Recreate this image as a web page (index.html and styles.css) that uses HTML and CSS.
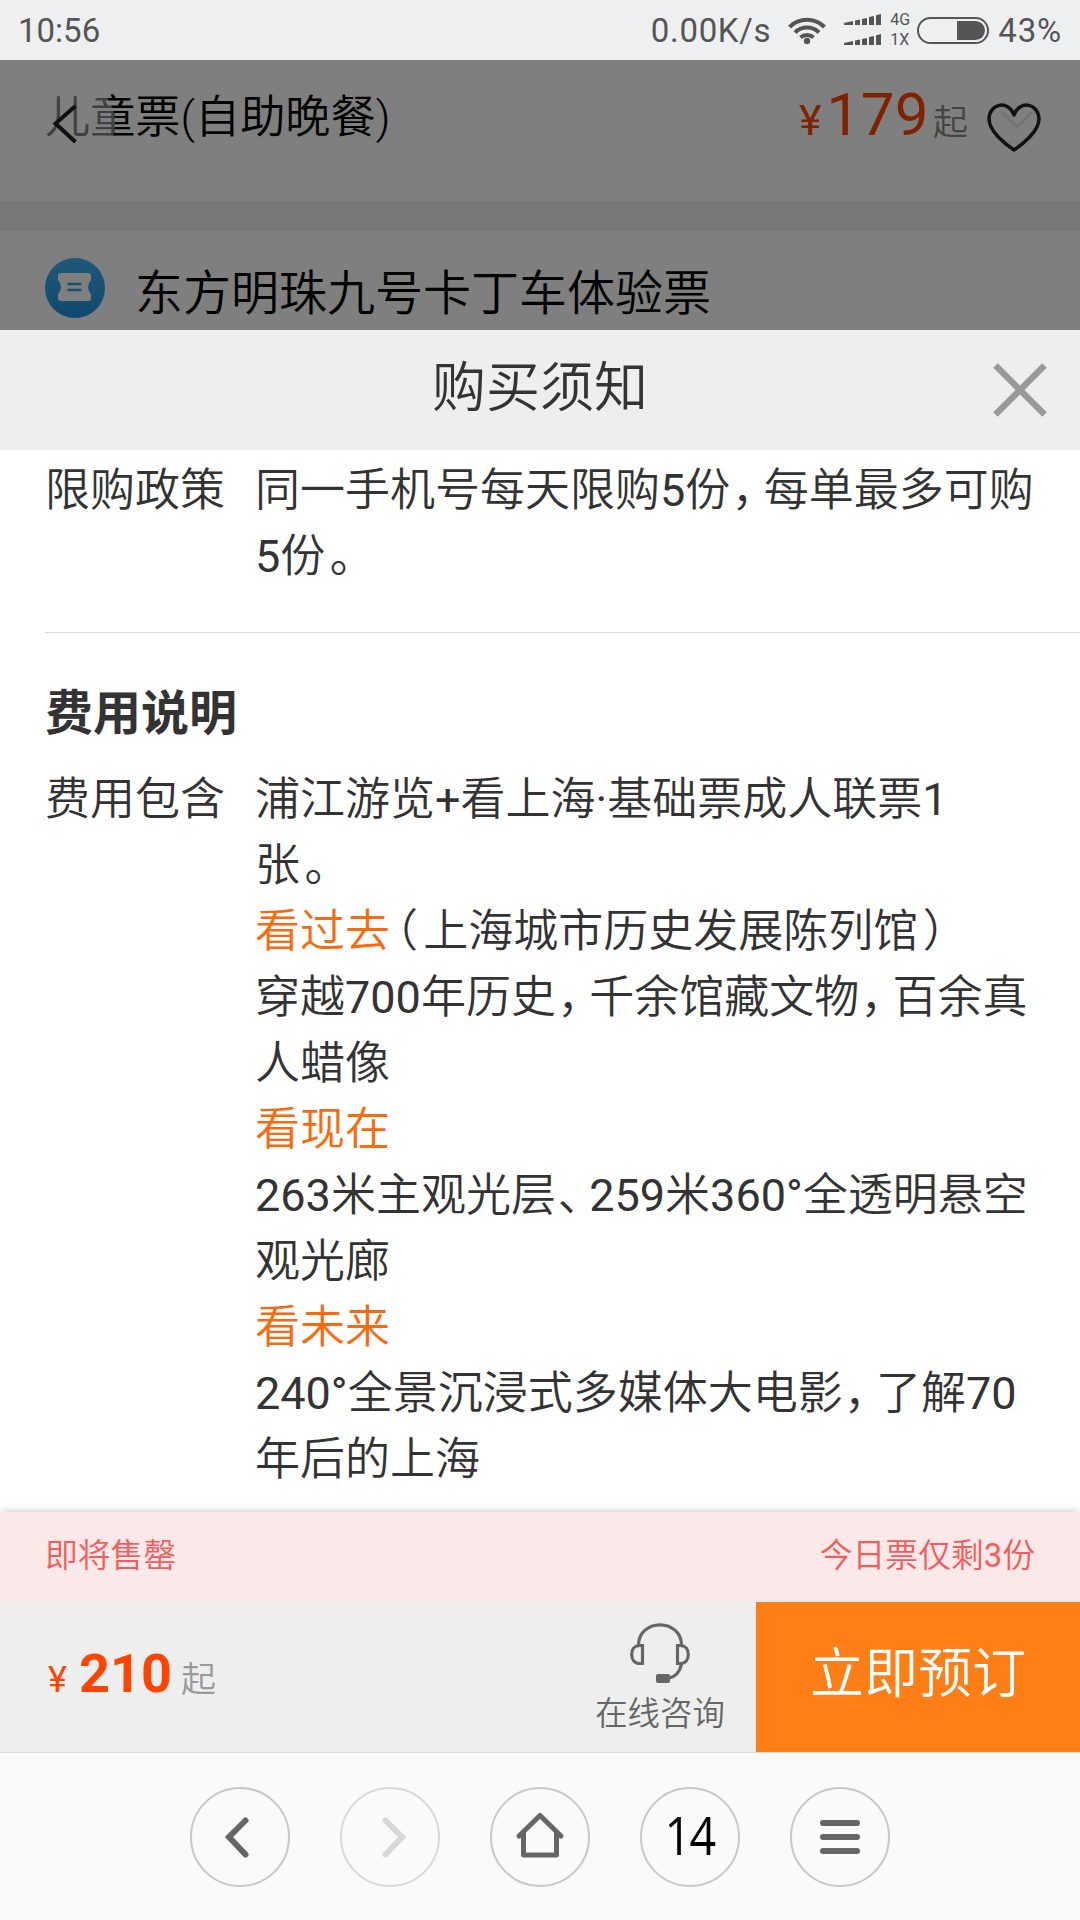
FILE: index.html
```html
<!DOCTYPE html>
<html lang="zh-CN">
<head>
	<meta charset="UTF-8">
	<title>购买须知</title>
	<link rel="stylesheet" href="styles.css">
</head>
<body>
	<div class="status">
		<span class="time">10:56</span>
		<span class="speed">0.00K/s</span>
		<svg class="wifi" width="38" height="30" viewBox="0 0 38 30">
			<g fill="none" stroke="#555" stroke-width="4">
				<path d="M1.5 12 A25 25 0 0 1 36.5 12"/>
				<path d="M7 17.5 A17 17 0 0 1 31 17.5"/>
				<path d="M12.5 22.5 A9.5 9.5 0 0 1 25.5 22.5"/>
			</g>
			<circle cx="19" cy="26" r="3.2" fill="#555"/>
		</svg>
		<svg class="signal" width="37" height="32" viewBox="0 0 37 32" fill="#555">
			<path d="M0 9L9 7V11H0ZM11 6.5L16 5.5V11H11ZM18 5L23 4V11H18ZM25 3L30 2V11H25ZM32 1.2L37 0V11H32Z"/>
			<path d="M0 29L9 27V31H0ZM11 26.5L16 25.5V31H11ZM18 25L23 24V31H18ZM25 23L30 22V31H25ZM32 21.2L37 20V31H32Z"/>
		</svg>
		<div class="net"><span>4G</span><span>1X</span></div>
		<div class="battery"><i></i></div>
		<span class="percent">43%</span>
	</div>

	<div class="page">
		<div class="ticket">
			<span class="ticket_name">儿童票(自助晚餐)</span>
			<span class="ticket_price"><i>¥</i><b>179</b><em>起</em></span>
			<svg class="arrow_down" width="34" height="20" viewBox="0 0 34 20"><path d="M2 2L17 17L32 2" fill="none" stroke="#ccc" stroke-width="3"/></svg>
			<div class="btn_back">
				<svg width="90" height="90" viewBox="0 0 90 90"><path d="M50.5 28L30.5 45.5L50.5 64" fill="none" stroke="#222" stroke-width="4"/></svg>
			</div>
			<div class="btn_like">
				<svg width="90" height="90" viewBox="0 0 90 90"><path d="M44 72C35 66 19 53 19 41C19 26 38 21 44 37C50 21 69 26 69 41C69 53 53 66 44 72Z" fill="none" stroke="#222" stroke-width="3.5" stroke-linejoin="round"/></svg>
			</div>
		</div>
		<div class="shop">
			<svg class="shop_icon" width="60" height="60" viewBox="0 0 60 60">
				<defs><linearGradient id="blue" x1="0" y1="0" x2="0" y2="1"><stop offset="0" stop-color="#40b0f0"/><stop offset="1" stop-color="#1e94dc"/></linearGradient></defs>
				<circle cx="30" cy="30" r="30" fill="url(#blue)"/>
				<path d="M16 15H43Q46 15 46 18V22Q43 25 43 29T46 36V40Q46 43 43 43H16Q13 43 13 40V36Q16 33 16 29T13 22V18Q13 15 16 15Z" fill="#fff"/>
				<path d="M22.500 26H36.500M22.500 32H36.500" stroke="#2fa2e6" stroke-width="2.500"/>
			</svg>
			<span>东方明珠九号卡丁车体验票</span>
		</div>
		<div class="mask"></div>
	</div>

	<div class="dialog">
		<div class="dialog_head">
			<h1>购买须知</h1>
			<svg class="close" width="54" height="54" viewBox="0 0 54 54"><path d="M2.500 2.500L51.500 51.500M51.500 2.500L2.500 51.500" stroke="#999" stroke-width="6.500"/></svg>
		</div>
		<div class="row row_limit">
			<div class="label">限购政策</div>
			<div class="value">同一手机号每天限购<i>5</i>份<span class="comma">，</span>每单最多可购<br><i>5</i>份<span class="stop">。</span></div>
		</div>
		<div class="fee">
			<h2>费用说明</h2>
			<div class="row">
				<div class="label">费用包含</div>
				<div class="value">浦江游览<i>+</i>看上海<i>·</i>基础票成人联票<i>1</i><br>张<span class="stop">。</span><br>
					<span class="hot">看过去</span><span class="paren">（</span>上海城市历史发展陈列馆<span class="paren_end">）</span><br>
					穿越<i>700</i>年历史<span class="comma">，</span>千余馆藏文物<span class="comma">，</span>百余真<br>人蜡像<br>
					<span class="hot">看现在</span><br>
					<i>263</i>米主观光层<span class="pause">、</span><i>259</i>米<i>360°</i>全透明悬空<br>观光廊<br>
					<span class="hot">看未来</span><br>
					<i>240°</i>全景沉浸式多媒体大电影<span class="comma">，</span>了解<i>70</i><br>年后的上海
				</div>
			</div>
		</div>
	</div>

	<div class="tip"><span>即将售罄</span><span>今日票仅剩<i>3</i>份</span></div>

	<div class="order">
		<div class="order_price"><i>¥</i><b>210</b><em>起</em></div>
		<div class="service">
			<svg width="60" height="60" viewBox="0 0 60 60">
				<g fill="none" stroke="#666" stroke-width="3.2">
					<path d="M8.500 22C8.500 10 18 1.800 30 1.800S51.500 10 51.500 22"/>
					<path d="M12.500 22.500H10C4 22.500 1.700 27 1.700 31.500S4 40.500 10 40.500H12.500Z"/>
					<path d="M47.500 22.500H50C56 22.500 58.300 27 58.300 31.500S56 40.500 50 40.500H47.500Z"/>
					<path d="M51.500 41C50 49 45 54 38 55.500"/>
				</g>
				<rect x="26" y="51" width="14" height="9" rx="2" fill="#666"/>
			</svg>
			<span>在线咨询</span>
		</div>
		<div class="btn_order">立即预订</div>
	</div>

	<div class="nav">
		<div class="nav_btn"><svg width="96" height="96" viewBox="0 0 96 96"><path d="M53.500 31.500L37 48L53.500 65.500" stroke="#666"/></svg></div>
		<div class="nav_btn off"><svg width="96" height="96" viewBox="0 0 96 96"><path d="M43.500 31.500L60 48L43.500 65.500" stroke="#d8d8d8"/></svg></div>
		<div class="nav_btn"><svg width="96" height="96" viewBox="0 0 96 96"><path class="home" d="M27 47L48 26.500L69 47M31.500 44V66H64.500V44" stroke="#666"/></svg></div>
		<div class="nav_btn"><span class="tabs">14</span></div>
		<div class="nav_btn"><svg width="96" height="96" viewBox="0 0 96 96"><path d="M31 34H65M31 48H65M31 62H65" stroke="#666"/></svg></div>
	</div>
</body>
</html>
```

FILE: styles.css
```css
*{
	margin:0;
	padding:0;
	box-sizing:border-box;
}

body{
	width:1080px;
	height:1920px;
	overflow:hidden;
	display:flex;
	flex-direction:column;
	background-color:#fff;
	color:#333;
	font-family:Roboto,"Noto Sans CJK SC",sans-serif;
	font-weight:350;
	white-space:nowrap;
}

i,em{
	font-style:normal;
}

/* 数字和符号 */
i{
	font-weight:400;
}

svg{
	display:block;
	flex:none;
}

/* 状态栏 */
.status{
	height:60px;
	padding:0 18px 0 18px;
	display:flex;
	align-items:center;
	background-color:#eeeff1;
	color:#555;
	font-size:33px;
	font-weight:400;
}

.time{
	flex:1;
}

.speed{
	letter-spacing:0.7px;
}

.wifi{
	margin-left:17px;
}

.signal{
	margin-left:18px;
}

.net{
	margin-left:9px;
	width:24px;
	display:flex;
	flex-direction:column;
	font-size:16px;
	line-height:20px;
}

.battery{
	margin-left:3px;
	width:72px;
	height:27px;
	padding:2px;
	border:2px solid #555;
	border-radius:14px;
	display:flex;
	justify-content:flex-end;
}

.battery i{
	width:28px;
	background-color:#555;
	border-radius:0 10px 10px 0;
}

.percent{
	margin-left:9px;
	letter-spacing:0.8px;
}

/* 背景页面 */
.page{
	height:270px;
	overflow:hidden;
	position:relative;
	background-color:#f0f0f0;
	color:#000;
}

.mask{
	position:absolute;
	left:0;
	top:0;
	width:100%;
	height:100%;
	background-color:rgba(0,0,0,0.5);
}

.ticket{
	height:141px;
	padding:0 112px 0 45px;
	display:flex;
	justify-content:space-between;
	align-items:flex-start;
	background-color:#fff;
	line-height:110px;
}

.ticket_name{
	font-size:45.2px;
	line-height:116px;
}

.ticket_price{
	color:#f40;
	font-weight:400;
}

.ticket_price i{
	font-size:43px;
}

.ticket_price b{
	margin-left:5px;
	font-size:60px;
	font-weight:400;
	letter-spacing:0.4px;
}

.ticket_price em{
	margin-left:4px;
	color:#888;
	font-size:35px;
	font-weight:350;
}

.arrow_down{
	position:absolute;
	left:1000px;
	top:50px;
}

.btn_back,.btn_like{
	position:absolute;
	top:18px;
	width:90px;
	height:90px;
	border-radius:50%;
	background-color:rgba(255,255,255,0.5);
}

.btn_back{
	left:25px;
}

.btn_like{
	left:970px;
}

.shop{
	margin-top:30px;
	height:120px;
	padding:27px 45px 0;
	display:flex;
	align-items:flex-start;
	gap:30px;
	background-color:#fff;
	font-size:48px;
	line-height:71px;
}

/* 购买须知 */
.dialog{
	height:1182px;
}

.dialog_head{
	height:120px;
	padding:0 33px;
	display:grid;
	grid-template-columns:54px 1fr 54px;
	align-items:center;
	background-color:#eee;
}

.dialog_head h1{
	grid-column:2;
	padding-bottom:3px;
	text-align:center;
	font-size:54px;
	font-weight:350;
	line-height:106px;
}

.row{
	display:flex;
	font-size:45px;
	line-height:66px;
}

.label{
	width:210px;
}

.row_limit{
	height:183px;
	margin-left:45px;
	padding-top:8px;
	border-bottom:1px solid #d9d9d9;
}

.fee{
	padding:45px 0 0 45px;
}

.fee h2{
	margin-bottom:17px;
	font-size:48px;
	font-weight:700;
	line-height:72px;
}

.hot{
	color:#f96a0e;
}

/* 标点半宽 */
.comma,.pause,.paren{
	font-feature-settings:"halt";
}

.comma{
	margin:0 0.21em 0 0.03em;
}

.pause{
	margin:0 0.2em 0 0.04em;
}

.paren{
	margin:0 0.12em;
}

.paren_end,.stop{
	margin-left:0.1em;
}

/* 售罄提示 */
.tip{
	height:90px;
	padding:0 45px;
	display:flex;
	justify-content:space-between;
	background-color:#fae9e8;
	box-shadow:0 -2px 8px -1px rgba(0,0,0,0.2);
	color:#f45b5b;
	font-size:32.8px;
	line-height:88px;
}

/* 底部预订 */
.order{
	height:150px;
	padding-left:48px;
	display:flex;
	background-color:#eee;
}

.order_price{
	flex:1;
	color:#f40;
	line-height:144px;
}

.order_price i{
	font-size:36px;
}

.order_price b{
	margin-left:12px;
	font-size:54px;
	font-weight:700;
}

.order_price em{
	margin-left:9px;
	color:#999;
	font-size:35px;
}

.service{
	width:192px;
	padding-top:21px;
	display:flex;
	flex-direction:column;
	align-items:center;
	color:#666;
	font-size:32.4px;
	line-height:63px;
}

.btn_order{
	width:324px;
	background-color:#ff7f16;
	color:#fff;
	font-size:54px;
	line-height:146px;
	text-align:center;
}

/* 浏览器导航 */
.nav{
	height:168px;
	padding-top:34px;
	border-top:1px solid #ddd;
	display:flex;
	justify-content:center;
	gap:50px;
	background-color:#fafafa;
}

.nav_btn{
	width:100px;
	height:100px;
	border:2px solid #c8c8c8;
	border-radius:50%;
	display:flex;
	align-items:center;
	justify-content:center;
}

.off{
	border-color:#d8d8d8;
}

.tabs{
	padding:0 2px 4px 0;
	color:#000;
	font-family:"Open Sans",sans-serif;
	font-size:53px;
	font-weight:400;
	line-height:92px;
	letter-spacing:-2px;
	transform:scaleX(0.88);
}

.nav_btn path{
	fill:none;
	stroke-width:6;
	stroke-linecap:round;
}

.nav_btn .home{
	stroke-width:5;
	stroke-linejoin:round;
}
```
